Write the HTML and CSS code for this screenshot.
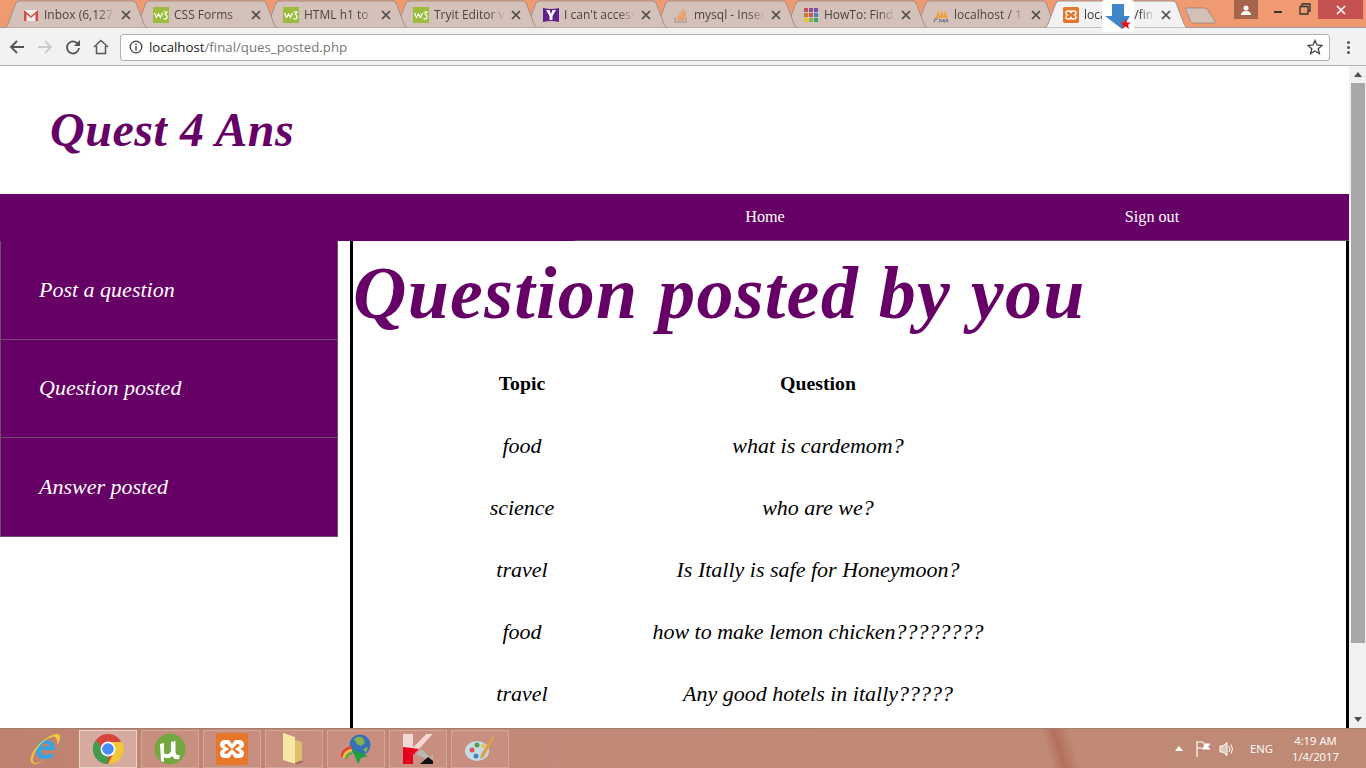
FILE: index.html
```html
<!DOCTYPE html>
<html lang="en">
<head>
<meta charset="utf-8">
<title>localhost/final/ques_posted.php</title>
<link rel="stylesheet" href="styles.css">
</head>
<body>
<svg class="defs" width="0" height="0">
  <symbol id="tabshape" viewBox="0 0 142 28" preserveAspectRatio="none">
    <path d="M0 28 L1 27 Q2 26 3 24 L10.500 4 Q11.500 1 14 1 H128 Q130.500 1 131.500 4 L139 24 Q140 26 141 27 L142 28 Z"/>
  </symbol>
  <symbol id="x" viewBox="0 0 10 10"><path d="M1 1 L9 9 M9 1 L1 9" fill="none" stroke="#4a4a4a" stroke-width="1.700"/></symbol>
  <symbol id="w3" viewBox="0 0 16 16"><rect width="16" height="16" fill="#9bbc3c"/><path d="M1.500 6 L3.500 10.500 L5.500 7 L7.500 10.500 L9.500 6" fill="none" stroke="#fff" stroke-width="1.200"/><path d="M10.500 5 H14 L12 7.500 Q14.500 8 14 10.500 Q13 13 10.500 11.500" fill="none" stroke="#fff" stroke-width="1.200"/></symbol>
</svg>

<div class="tabstrip">
  <div class="tab"><svg class="shape"><use href="#tabshape"/></svg>
    <svg class="fav" viewBox="0 0 16 16"><path d="M1 3 H15 V14 H1 Z" fill="#eee"/><path d="M1 3 L8 9 L15 3 V14 H12.500 V7 L8 11 L3.500 7 V14 H1 Z" fill="#d64b3e"/></svg>
    <span class="tabtext">Inbox (6,127)</span><svg class="close"><use href="#x"/></svg></div>
  <div class="tab"><svg class="shape"><use href="#tabshape"/></svg>
    <svg class="fav"><use href="#w3"/></svg>
    <span class="tabtext">CSS Forms</span><svg class="close"><use href="#x"/></svg></div>
  <div class="tab"><svg class="shape"><use href="#tabshape"/></svg>
    <svg class="fav"><use href="#w3"/></svg>
    <span class="tabtext">HTML h1 to</span><svg class="close"><use href="#x"/></svg></div>
  <div class="tab"><svg class="shape"><use href="#tabshape"/></svg>
    <svg class="fav"><use href="#w3"/></svg>
    <span class="tabtext">Tryit Editor v</span><svg class="close"><use href="#x"/></svg></div>
  <div class="tab"><svg class="shape"><use href="#tabshape"/></svg>
    <svg class="fav" viewBox="0 0 16 16"><path d="M0 1 Q8 3 16 1 V15 Q8 13 0 15 Z" fill="#5f1f91"/><path d="M3 3 H6.500 L8 7 L9.500 3 H13 L9.500 9 V13 H6.500 V9 Z" fill="#fff"/></svg>
    <span class="tabtext">I can't access</span><svg class="close"><use href="#x"/></svg></div>
  <div class="tab"><svg class="shape"><use href="#tabshape"/></svg>
    <svg class="fav" viewBox="0 0 16 16"><path d="M2 10 V15 H13 V10" fill="none" stroke="#a8a39c" stroke-width="1.300"/><path d="M4 13 H11 M4 11 L11 11.800 M4.500 8.800 L11 10.500 M6 6.500 L11.500 9.500 M8 4 L12.500 8.500 M10 2 L13 7" fill="none" stroke="#f0954e" stroke-width="1.200"/></svg>
    <span class="tabtext">mysql - Inser</span><svg class="close"><use href="#x"/></svg></div>
  <div class="tab"><svg class="shape"><use href="#tabshape"/></svg>
    <svg class="fav" viewBox="0 0 16 16"><rect x="1" y="1" width="4" height="4" fill="#c2504f"/><rect x="6" y="1" width="4" height="4" fill="#8f4a9e"/><rect x="11" y="1" width="4" height="4" fill="#7b4fa3"/><rect x="1" y="6" width="4" height="4" fill="#c97a2c"/><rect x="6" y="6" width="4" height="4" fill="#d1574a"/><rect x="11" y="6" width="4" height="4" fill="#3f86c8"/><rect x="1" y="11" width="4" height="4" fill="#efc12c"/><rect x="6" y="11" width="4" height="4" fill="#84b84a"/><rect x="11" y="11" width="4" height="4" fill="#3ea36a"/></svg>
    <span class="tabtext">HowTo: Find</span><svg class="close"><use href="#x"/></svg></div>
  <div class="tab"><svg class="shape"><use href="#tabshape"/></svg>
    <svg class="fav" viewBox="0 0 16 16"><path d="M2 11 L6 3 L6.500 11 Z M6 11 L9.500 2 L10 11 Z M9.500 11 L12 4 L15 11 Z" fill="#f0a03c"/><path d="M1 15.500 L2 12 H5 M7 12 L6.500 15.500 M7 12 L9 15 L11 12 V15.500 M12 15.500 L14 12 L15 15.500" fill="none" stroke="#55557a" stroke-width=".8"/></svg>
    <span class="tabtext">localhost / 1</span><svg class="close"><use href="#x"/></svg></div>
  <div class="tab tab-active"><svg class="shape"><use href="#tabshape"/></svg>
    <svg class="fav" viewBox="0 0 16 16"><rect width="16" height="16" rx="2" fill="#e8762b"/><path d="M5 4 H7 L8 5.500 L9 4 H11 Q13 4 13 6 Q13 7.200 11.500 8 Q13 8.800 13 10 Q13 12 11 12 H9 L8 10.500 L7 12 H5 Q3 12 3 10 Q3 8.800 4.500 8 Q3 7.200 3 6 Q3 4 5 4 Z" fill="none" stroke="#fff" stroke-width="1.400"/></svg>
    <span class="tabtext tabtext-active">localhost/fin</span><svg class="close"><use href="#x"/></svg>
    <div class="overlay-arrow">
      <svg viewBox="0 0 32 32" width="32" height="32"><path d="M10 4 H22 V16 H28 L20 29 L3 16 H10 Z" fill="#3f86c8"/><path d="M23.500 18.500 L25 22.500 L29 22.500 L26 25 L27 29 L23.500 26.500 L20 29 L21 25 L18 22.500 L22 22.500 Z" fill="#e8141c"/></svg>
    </div>
  </div>
  <svg class="newtab" viewBox="0 0 34 18"><path d="M1.500 2 Q1 1 3 1 H22 Q24 1 25 3 L33 15 Q34 17 31 17 H10 Q8 17 7 15 Z" fill="#d3c0b8" stroke="#a5877a"/></svg>
  <div class="winctl">
    <div class="winuser"><svg viewBox="0 0 12 10" width="12" height="10"><circle cx="6" cy="3" r="2.500" fill="#fff"/><path d="M1 10 Q1 6 6 6 Q11 6 11 10 Z" fill="#fff"/></svg></div>
    <div class="winbtn"><span class="minbar"></span></div>
    <div class="winbtn"><svg viewBox="0 0 12 12" width="12" height="12"><path d="M3 3 V1 H11 V8 H9 M1 3.500 H9 V11 H1 Z" fill="none" stroke="#333" stroke-width="1.300"/></svg></div>
    <div class="winclose"><svg viewBox="0 0 12 12" width="12" height="12"><path d="M2 2 L10 10 M10 2 L2 10" stroke="#fff" stroke-width="1.600"/></svg></div>
  </div>
</div>

<div class="toolbar">
  <svg class="tbicon" viewBox="0 0 16 16"><path d="M15 8 H2 M8 2 L2 8 L8 14" fill="none" stroke="#555" stroke-width="1.800"/></svg>
  <svg class="tbicon" viewBox="0 0 16 16"><path d="M1 8 H14 M8 2 L14 8 L8 14" fill="none" stroke="#ccc" stroke-width="1.800"/></svg>
  <svg class="tbicon" viewBox="0 0 16 16"><path d="M13.500 6 A6 6 0 1 0 14 9" fill="none" stroke="#555" stroke-width="1.800"/><path d="M15 1 V7 H9 Z" fill="#555"/></svg>
  <svg class="tbicon" viewBox="0 0 16 16"><path d="M1 8 L8 1.500 L15 8 M3.500 7 V14.500 H12.500 V7" fill="none" stroke="#555" stroke-width="1.500"/></svg>
  <div class="omnibox">
    <svg class="info" viewBox="0 0 14 14"><circle cx="7" cy="7" r="5.800" fill="none" stroke="#444" stroke-width="1.300"/><path d="M7 6 V10.500 M7 3.500 V5" stroke="#444" stroke-width="1.400"/></svg>
    <span class="url"><span class="host">localhost</span>/final/ques_posted.php</span>
    <svg class="star" viewBox="0 0 16 16"><path d="M8 1.500 L10 6 L15 6.500 L11.200 9.700 L12.400 14.600 L8 12 L3.600 14.600 L4.800 9.700 L1 6.500 L6 6 Z" fill="none" stroke="#444" stroke-width="1.300"/></svg>
  </div>
  <div class="dots"><i></i><i></i><i></i></div>
</div>

<div class="viewport">
  <div class="page">
    <header class="brand"><h1>Quest 4 Ans</h1></header>
    <nav class="navbar">
      <span class="navspace"></span>
      <a class="navlink">Home</a>
      <a class="navlink">Sign out</a>
    </nav>
    <div class="content">
      <aside class="sidebar">
        <a class="sideitem">Post a question</a>
        <a class="sideitem">Question posted</a>
        <a class="sideitem">Answer posted</a>
      </aside>
      <main class="mainpane">
        <h2>Question posted by you</h2>
        <table class="qtable">
          <tr><th>Topic</th><th>Question</th></tr>
          <tr><td>food</td><td>what is cardemom?</td></tr>
          <tr><td>science</td><td>who are we?</td></tr>
          <tr><td>travel</td><td>Is Itally is safe for Honeymoon?</td></tr>
          <tr><td>food</td><td>how to make lemon chicken????????</td></tr>
          <tr><td>travel</td><td>Any good hotels in itally?????</td></tr>
        </table>
      </main>
    </div>
  </div>
  <div class="scrollbar">
    <div class="sb-arrow"><svg viewBox="0 0 8 5" width="8" height="5"><path d="M0 5 L4 0 L8 5 Z" fill="#505050"/></svg></div>
    <div class="sb-track"><div class="sb-thumb"></div></div>
    <div class="sb-arrow"><svg viewBox="0 0 8 5" width="8" height="5"><path d="M0 0 L4 5 L8 0 Z" fill="#505050"/></svg></div>
  </div>
</div>

<footer class="taskbar">
  <div class="tb-start"><svg viewBox="0 0 36 36" width="36" height="36"><path d="M9 19 H28 Q28 9 18.500 9 Q9 10 9 19 Q9 28 18.500 28 Q25 28 27.500 23 H21.500 Q19.500 24.500 17.500 24 Q14 23.500 14 19 M14.500 15.500 Q15 12.500 18.500 12.500 Q22 12.500 23 15.500 Z" fill="#35a5e2" fill-rule="evenodd"/><path d="M5 32 Q1 28 8 18 Q17 6 28 3 Q34 2 33 8 Q32.500 11 30 14 Q31 7 27 5.500 Q18 6.500 10 18 Q4 27 6.500 31.500 Q11 33 17 29 Q9 35 5 32 Z" fill="#f0c63c"/></svg></div>
  <div class="tb-item tb-on"><svg viewBox="0 0 32 32" width="32" height="32"><circle cx="16" cy="16" r="15" fill="#d9453a"/><path d="M16 16 L3 23.500 A15 15 0 0 0 16 31 Z M3 23.500 A15 15 0 0 1 4 7 L12 18 Z" fill="#3f9e4d"/><path d="M16 9 H30 A15 15 0 0 1 16 31 L22 19 Z" fill="#f2c838"/><circle cx="16" cy="16" r="7.500" fill="#fff"/><circle cx="16" cy="16" r="5.800" fill="#4b8bf4"/></svg></div>
  <div class="tb-item"><svg viewBox="0 0 32 32" width="32" height="32"><circle cx="16" cy="16" r="15.500" fill="#73a83f"/><path d="M6 11 L10 10 V19 Q10 22 14 21 Q17 20 17 17 V9 L21.500 8 V19 Q22 23 26 22 L25 26 Q20 27 18.500 23 Q14 27 10 24 V29 L7 28 Z" fill="#fff"/></svg></div>
  <div class="tb-item"><svg viewBox="0 0 32 32" width="32" height="32"><rect width="32" height="32" rx="3" fill="#e8762b"/><path d="M9 7 H13 L16 11 L19 7 H23 Q28 7 28 12 Q28 14.500 24 16 Q28 17.500 28 20 Q28 25 23 25 H19 L16 21 L13 25 H9 Q4 25 4 20 Q4 17.500 8 16 Q4 14.500 4 12 Q4 7 9 7 Z M10 11 Q8 11 8.500 13 L13 16 L8.500 19 Q8 21 10 21 H11 L16 16 L21 21 H22 Q24 21 23.500 19 L19 16 L23.500 13 Q24 11 22 11 H21 L16 16 L11 11 Z" fill="#fff" fill-rule="evenodd"/></svg></div>
  <div class="tb-item"><svg viewBox="0 0 32 32" width="32" height="32"><path d="M9 28 H26 Q24 31 15 31 Z" fill="#9a6d5e"/><path d="M17 7 L24 9 V27 L17 30 Z" fill="#dcc070"/><path d="M5 0 L17 4 V31 L5 27 Z" fill="#f7e6a4"/></svg></div>
  <div class="tb-item"><svg viewBox="0 0 32 32" width="32" height="32"><circle cx="20" cy="12" r="10.500" fill="#3472b8"/><path d="M14 6 Q19 2 23 5 L25 10 L21 13 L17 11 Z M23 16 L28 14 L26 20 Z" fill="#86b04a"/><path d="M2 24 Q2 16 12 14" fill="none" stroke="#e8402c" stroke-width="2.500"/><path d="M4 25 Q4 19 12 17" fill="none" stroke="#efc23a" stroke-width="2.500"/><path d="M6 26 Q6 22 12 20" fill="none" stroke="#58a84e" stroke-width="2.500"/><path d="M12 16 L28 23 L21 25 L18 31 Z" fill="#1f9e3c"/></svg></div>
  <div class="tb-item"><svg viewBox="0 0 32 32" width="32" height="32"><path d="M1 1 H11 V14 L24 1 H31 L11 22 V31 H1 Z" fill="#e8001c"/><path d="M1 1 H11 V14 L24 1 H31 L17 16 L1 14 Z" fill="#f4d8d4"/><path d="M14 21 L19 16 L31 27 V21 L26 27 V31 H18 L24 26 Z" fill="#b8b8b8"/><path d="M18 31 L26 24 L31 28 V31 Z" fill="#111"/></svg></div>
  <div class="tb-item"><svg viewBox="0 0 32 32" width="32" height="32"><ellipse cx="13" cy="18" rx="12" ry="10" fill="#c6dbe6"/><circle cx="8" cy="17" r="2.500" fill="#d55"/><circle cx="13" cy="12" r="2.500" fill="#5a9e4e"/><circle cx="12" cy="23" r="2.500" fill="#4a80c8"/><circle cx="19" cy="13" r="2" fill="#e8c13a"/><path d="M29 2 L30 5 L20 24 L16 26 L17 21 Z" fill="#d8a24a"/></svg></div>
  <div class="tray">
    <svg class="tray-caret" viewBox="0 0 8 5" width="8" height="5"><path d="M0 5 L4 0 L8 5 Z" fill="#fff"/></svg>
    <svg viewBox="0 0 16 18" width="16" height="18"><path d="M2 1 V17" fill="none" stroke="#fff" stroke-width="1.200"/><path d="M2.500 2 H8 L9 4 H15 L12.500 7 L15 9 H8 L7 8 H2.500" fill="none" stroke="#fff"/><path d="M9 4 H15 L12.500 7 L15 9 H8 Z" fill="#fff"/></svg>
    <svg viewBox="0 0 16 16" width="16" height="16"><path d="M1 5 H4 L8 1.500 V14.500 L4 11 H1 Z" fill="#fff" fill-opacity=".5" stroke="#fff"/><path d="M10 5 Q12 8 10 11 M12 3.500 Q15 8 12 12.500" fill="none" stroke="#fff"/></svg>
    <span class="lang">ENG</span>
    <div class="clock"><span>4:19 AM</span><span>1/4/2017</span></div>
  </div>
</footer>
</body>
</html>
```
FILE: styles.css
```css
* { box-sizing: border-box; }
html, body { margin: 0; height: 100%; overflow: hidden; }
body { width: 1366px; height: 768px; display: flex; flex-direction: column; font-family: "Open Sans", "Noto Sans", sans-serif; background: #fff; }
.defs { position: absolute; }

/* tab strip */
.tabstrip { height: 28px; flex: none; background: #f09a72; display: flex; padding-left: 5px; position: relative; box-shadow: inset 0 -1px 0 #a39a94; }
.tab { width: 142px; margin-right: -12px; height: 28px; position: relative; display: flex; align-items: center; padding: 1px 0 0 18px; flex: none; }
.tab:nth-child(1) { z-index: 9; }
.tab:nth-child(2) { z-index: 8; }
.tab:nth-child(3) { z-index: 7; }
.tab:nth-child(4) { z-index: 6; }
.tab:nth-child(5) { z-index: 5; }
.tab:nth-child(6) { z-index: 4; }
.tab:nth-child(7) { z-index: 3; }
.tab:nth-child(8) { z-index: 2; }
.shape { position: absolute; inset: 0; width: 100%; height: 100%; fill: #d4c1b9; stroke: #a3908a; stroke-width: 1; }
.fav { width: 16px; height: 16px; position: relative; flex: none; margin-right: 5px; }
.tabtext { position: relative; font-size: 12px; color: #4a4442; white-space: nowrap; overflow: hidden; width: 74px; flex: none; -webkit-mask-image: linear-gradient(90deg, #000 74%, transparent 96%); mask-image: linear-gradient(90deg, #000 74%, transparent 96%); }
.close { width: 10px; height: 10px; position: relative; flex: none; margin-left: 3px; }
.tab.tab-active { z-index: 10; }
.tab-active .shape { fill: #f2f2f2; stroke: #a3908a; }
.tabtext-active { color: #333; }
.overlay-arrow { position: absolute; left: 57px; top: 0; width: 32px; height: 32px; background: #fff; border-radius: 3px; z-index: 5; }
.newtab { width: 34px; height: 17px; margin: 7px 0 0 8px; position: relative; flex: none; }
.winctl { position: absolute; right: 0; top: 0; display: flex; height: 20px; z-index: 2; }
.winuser { width: 24px; height: 19px; background: #a5654c; display: flex; align-items: center; justify-content: center; margin-right: 6px; }
.winbtn { width: 27px; height: 18px; display: flex; align-items: center; justify-content: center; }
.minbar { width: 8px; height: 2px; background: #333; margin-top: 5px; }
.winclose { width: 45px; height: 19px; background: #c75050; display: flex; align-items: center; justify-content: center; margin-right: 3px; }

/* toolbar */
.toolbar { height: 38px; flex: none; background: #f2f2f2; border-bottom: 1px solid #b4b4b4; display: flex; align-items: center; padding: 1px 0 0 9px; gap: 12px; }
.tbicon { width: 16px; height: 16px; flex: none; }
.omnibox { width: 1210px; height: 27px; background: #fff; border: 1px solid #b0b0b0; border-radius: 3px; display: flex; align-items: center; padding: 0 6px 0 8px; margin-left: -1px; }
.info { width: 14px; height: 14px; flex: none; margin-right: 6px; }
.url { font-size: 13.250px; color: #777; flex: 1; font-family: "Open Sans", sans-serif; }
.host { color: #222; }
.star { width: 16px; height: 16px; }
.dots { display: flex; flex-direction: column; gap: 2px; margin-left: 5px; }
.dots i { width: 3px; height: 3px; background: #555; display: block; border-radius: 50%; }

/* page */
.viewport { height: 662px; flex: none; display: flex; overflow: hidden; }
.page { flex: 1; min-width: 0; font-family: "Liberation Serif", "DejaVu Serif", serif; }
.brand { height: 128px; display: flex; align-items: center; padding: 0 0 2px 50px; }
.brand h1 { margin: 0; font-size: 48px; font-style: italic; font-weight: bold; color: #660066; letter-spacing: .55px; }
.navbar { height: 47px; background: #660066; display: flex; color: #fff; font-size: 16.200px; width: 1349px; }
.navspace { width: 575px; }
.navlink { width: 380px; display: flex; align-items: center; justify-content: center; border-bottom: 1px solid #6f4d6f; }
.navlink:last-child { width: 394px; }
.content { display: flex; }
.sidebar { width: 338px; flex: none; align-self: flex-start; }
.sideitem { display: flex; align-items: center; height: 98.500px; background: #660066; border: 1px solid #6f4d6f; border-top: 0; padding-left: 38px; color: #fff; font-size: 22px; font-style: italic; }
.mainpane { width: 999px; margin-left: 12px; border-left: 3px solid #000; border-right: 3px solid #000; height: 487px; overflow: hidden; }
.mainpane h2 { margin: 16px 0 0; font-size: 74px; line-height: 72px; font-style: italic; font-weight: bold; color: #660066; letter-spacing: 1.250px; white-space: nowrap; }
.qtable { border-collapse: collapse; margin: 24px 0 0 119px; font-size: 22px; }
.qtable tr { height: 62px; }
.qtable th, .qtable td { text-align: center; padding: 0; font-weight: normal; font-style: italic; color: #000; }
.qtable th { font-size: 19.800px; font-weight: bold; font-style: normal; padding-bottom: 2px; }
.qtable th:first-child, .qtable td:first-child { width: 100px; }
.qtable th:last-child, .qtable td:last-child { width: 492px; }

/* scrollbar */
.scrollbar { width: 17px; flex: none; background: #f1f1f1; display: flex; flex-direction: column; }
.sb-arrow { height: 17px; display: flex; align-items: center; justify-content: center; flex: none; }
.sb-track { flex: 1; }
.sb-thumb { width: 14px; margin-left: 2px; height: 560px; background: #a8a8a8; }

/* taskbar */
.taskbar { height: 40px; flex: none; display: flex; align-items: center; padding-left: 27px; gap: 4px; border-top: 1px solid #a37f70; background: linear-gradient(73deg, transparent 76.400%, #b3705a 77.300%, transparent 78.400%), linear-gradient(90deg, #bf8271 0, #c28a78 40%, #bf8a75 100%); }
.tb-start { width: 36px; height: 36px; margin: 0 12px 0 0; }
.tb-item { width: 58px; height: 38px; border: 1px solid #d3a798; background: #c88f80; display: flex; align-items: center; justify-content: center; }
.tb-on { background: #d6aa9e; border-color: #ecd5cd; }
.tray { margin-left: auto; display: flex; align-items: center; gap: 8px; color: #fff; font-size: 11.300px; padding-right: 27px; }
.tray-caret { margin-right: 4px; }
.lang { margin: 0 11px 0 7px; }
.clock { display: flex; flex-direction: column; align-items: center; line-height: 16px; }
```
